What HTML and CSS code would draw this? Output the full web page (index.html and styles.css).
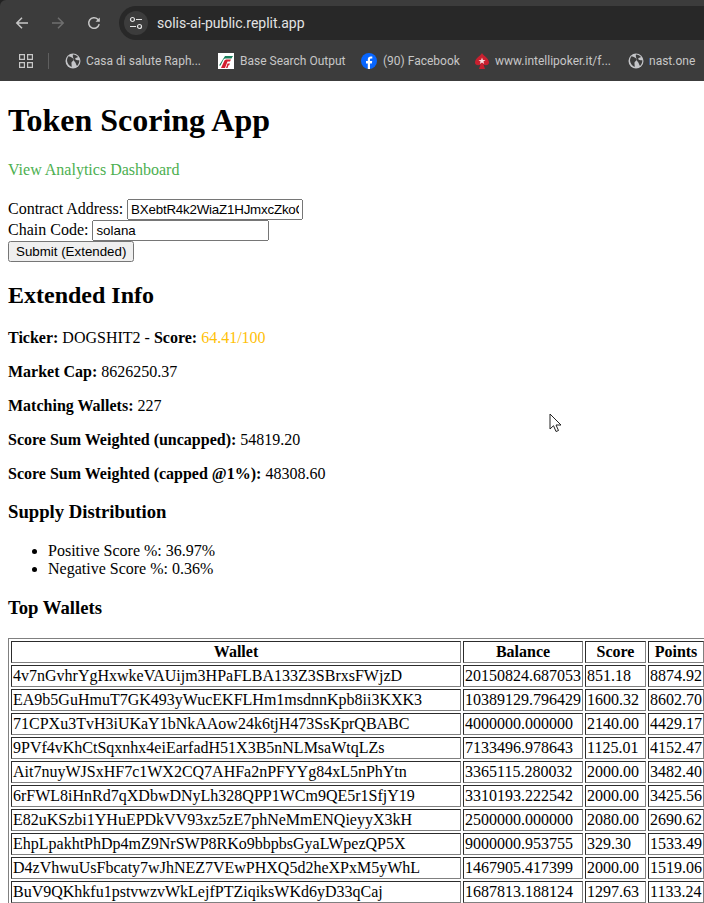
FILE: index.html
```html
<!DOCTYPE html>
<html lang="en">
<head>
<meta charset="utf-8">
<title>Token Scoring App</title>
<link rel="stylesheet" href="styles.css">
</head>
<body>
<div class="window">
  <header class="chrome">
    <div class="tabstrip"></div>
    <div class="toolbar">
      <svg class="nav" width="14" height="14" viewBox="0 0 14 14"><path d="M13 7H2M7 1.800L1.800 7 7 12.200" fill="none" stroke="#c7c7c7" stroke-width="1.500"/></svg>
      <svg class="nav nav-fwd" width="14" height="14" viewBox="0 0 14 14"><path d="M1 7h11M7 1.800L12.200 7 7 12.200" fill="none" stroke="#6f6f6f" stroke-width="1.500"/></svg>
      <svg class="nav nav-reload" width="14" height="14" viewBox="0 0 14 14"><path d="M12.200 8.200A5.300 5.300 0 1 1 10.800 3.300L12 4.600" fill="none" stroke="#c7c7c7" stroke-width="1.500"/><path d="M12.800 1.500v4.300H8.500z" fill="#c7c7c7"/></svg>
      <div class="omnibox">
        <span class="tune">
          <svg width="14" height="14" viewBox="0 0 14 14"><circle cx="3.500" cy="3.500" r="2" fill="none" stroke="#e3e3e3" stroke-width="1.200"/><path d="M7 3.500h6M1 10.500h6" stroke="#e3e3e3" stroke-width="1.200"/><circle cx="10.500" cy="10.500" r="2" fill="none" stroke="#e3e3e3" stroke-width="1.200"/></svg>
        </span>
        <span class="url">solis-ai-public.replit.app</span>
      </div>
    </div>
    <nav class="bookmarks">
      <svg class="apps" width="14" height="14" viewBox="0 0 14 14"><path d="M.6.600h4.800v4.800H.6zM8.600.600h4.800v4.800H8.600zM.6 8.600h4.800v4.800H.6zM8.600 8.600h4.800v4.800H8.600z" fill="none" stroke="#c7c7c7" stroke-width="1.200"/></svg>
      <span class="sep"></span>
      <a class="bm bm-casa"><svg width="16" height="16" viewBox="0 0 16 16"><circle cx="8" cy="8" r="7.500" fill="#c4c5c8"/><path d="M3.500 3.200C6 4 8 4.500 8.500 6.500 9 8 6.800 8.200 6.500 9.500 6.300 11 7 12.500 6.500 14 4 12.500 2 10 2 7.500 2 6 2.500 4.500 3.500 3.200zM8 1.500c2 .2 3.800 1 5 2.500-1 .8-2.500 .6-2.800 1.800C10 7 12.500 7.200 14.300 7.300 14.500 9.500 13.500 11.500 12 13 11 12 11 10 10 9 9 8 8.500 6.500 8.300 5 8 3.800 7.500 2.800 8 1.500z" fill="#3c3c3c"/></svg><span>Casa di salute Raph...</span></a>
      <a class="bm bm-fs"><svg width="16" height="16" viewBox="0 0 16 16"><rect width="16" height="16" fill="#fff"/><path d="M7 3h8l-1.500 2.500H8C6.500 5.500 5.500 6 5 7.500L2.500 12.500H1z" fill="#1b7f5c"/><path d="M3 15l3-6.500C6.500 7 7.500 6.500 9 6.500h4L12 8.500H9.500L7 15z" fill="#d3202f"/><path d="M8 15l1.500-4.500H12l-.8 1.800H10.500L9.500 15z" fill="#d3202f"/></svg><span>Base Search Output</span></a>
      <a class="bm bm-fb"><svg width="16" height="16" viewBox="0 0 16 16"><circle cx="8" cy="8" r="8" fill="#0866ff"/><path d="M6.800 16V10.400H5V8h1.800V6.600C6.800 4.500 8 3.400 9.800 3.400c.6 0 1.200.1 1.500.1v2H10.200C9.300 5.500 9 6 9 6.700V8h2.200l-.4 2.400H9V16z" fill="#fff"/></svg><span>(90) Facebook</span></a>
      <a class="bm bm-poker"><svg width="16" height="16" viewBox="0 0 16 16"><path d="M8 0C9 2.500 15 5 15 9.500 15 12 12 13 9.500 11.500L11 16H5l1.500-4.500C4 13 1 12 1 9.500 1 5 7 2.500 8 0z" fill="#c8202f"/><path d="M8 4.500l.9 2.500h2.600L9.400 8.500l.8 2.500L8 9.500 5.800 11l.8-2.500L4.500 7h2.600z" fill="#f6e3e3"/></svg><span>www.intellipoker.it/f...</span></a>
      <a class="bm bm-nast"><svg width="16" height="16" viewBox="0 0 16 16"><circle cx="8" cy="8" r="7.500" fill="#c4c5c8"/><path d="M3.500 3.200C6 4 8 4.500 8.500 6.500 9 8 6.800 8.200 6.500 9.500 6.300 11 7 12.500 6.500 14 4 12.500 2 10 2 7.500 2 6 2.500 4.500 3.500 3.200zM8 1.500c2 .2 3.800 1 5 2.500-1 .8-2.500 .6-2.800 1.800C10 7 12.500 7.200 14.300 7.300 14.500 9.500 13.500 11.500 12 13 11 12 11 10 10 9 9 8 8.500 6.500 8.300 5 8 3.800 7.500 2.800 8 1.500z" fill="#3c3c3c"/></svg><span>nast.one</span></a>
    </nav>
  </header>
  <main class="page">
    <h1>Token Scoring App</h1>
    <p class="dash-row"><a class="dash" href="#">View Analytics Dashboard</a></p>
    <form>
      <label>Contract Address: <input class="addr" type="text" value="BXebtR4k2WiaZ1HJmxcZkoGYYcPumpVgE"></label><br>
      <label>Chain Code: <input class="chain" type="text" value="solana"></label><br>
      <button type="button">Submit (Extended)</button>
    </form>
    <h2>Extended Info</h2>
    <p><strong>Ticker:</strong> DOGSHIT2 - <strong>Score:</strong> <span class="score">64.41/100</span></p>
    <p><strong>Market Cap:</strong> 8626250.37</p>
    <p><strong>Matching Wallets:</strong> 227</p>
    <p><strong>Score Sum Weighted (uncapped):</strong> 54819.20</p>
    <p><strong>Score Sum Weighted (capped @1%):</strong> 48308.60</p>
    <h3>Supply Distribution</h3>
    <ul>
      <li>Positive Score %: 36.97%</li>
      <li>Negative Score %: 0.36%</li>
    </ul>
    <h3>Top Wallets</h3>
    <table border="1">
      <thead><tr><th class="c-wallet">Wallet</th><th class="c-balance">Balance</th><th class="c-score">Score</th><th class="c-points">Points</th></tr></thead>
      <tbody>
        <tr><td>4v7nGvhrYgHxwkeVAUijm3HPaFLBA133Z3SBrxsFWjzD</td><td>20150824.687053</td><td>851.18</td><td>8874.92</td></tr>
        <tr><td>EA9b5GuHmuT7GK493yWucEKFLHm1msdnnKpb8ii3KXK3</td><td>10389129.796429</td><td>1600.32</td><td>8602.70</td></tr>
        <tr><td>71CPXu3TvH3iUKaY1bNkAAow24k6tjH473SsKprQBABC</td><td>4000000.000000</td><td>2140.00</td><td>4429.17</td></tr>
        <tr><td>9PVf4vKhCtSqxnhx4eiEarfadH51X3B5nNLMsaWtqLZs</td><td>7133496.978643</td><td>1125.01</td><td>4152.47</td></tr>
        <tr><td>Ait7nuyWJSxHF7c1WX2CQ7AHFa2nPFYYg84xL5nPhYtn</td><td>3365115.280032</td><td>2000.00</td><td>3482.40</td></tr>
        <tr><td>6rFWL8iHnRd7qXDbwDNyLh328QPP1WCm9QE5r1SfjY19</td><td>3310193.222542</td><td>2000.00</td><td>3425.56</td></tr>
        <tr><td>E82uKSzbi1YHuEPDkVV93xz5zE7phNeMmENQieyyX3kH</td><td>2500000.000000</td><td>2080.00</td><td>2690.62</td></tr>
        <tr><td>EhpLpakhtPhDp4mZ9NrSWP8RKo9bbpbsGyaLWpezQP5X</td><td>9000000.953755</td><td>329.30</td><td>1533.49</td></tr>
        <tr><td>D4zVhwuUsFbcaty7wJhNEZ7VEwPHXQ5d2heXPxM5yWhL</td><td>1467905.417399</td><td>2000.00</td><td>1519.06</td></tr>
        <tr><td>BuV9QKhkfu1pstvwzvWkLejfPTZiqiksWKd6yD33qCaj</td><td>1687813.188124</td><td>1297.63</td><td>1133.24</td></tr>
      </tbody>
    </table>
    <svg class="cursor" width="14" height="20" viewBox="0 0 14 20"><path d="M1 1v15l3.500-3.300L7 18.500l2.500-1-2.500-5.500h5z" fill="#fff" stroke="#222" stroke-width="1"/></svg>
  </main>
</div>
</body>
</html>
```
FILE: styles.css
```css
html, body {
  margin: 0;
  padding: 0;
  background: #fff;
  overflow: hidden;
}
.window {
  width: 704px;
  height: 903px;
  overflow: hidden;
  display: flex;
  flex-direction: column;
  background: #222;
}
.chrome {
  flex: none;
  height: 81px;
  background: #3c3c3c;
  border-top-left-radius: 6px;
  font-family: Roboto, "Noto Sans", sans-serif;
  color: #c7c7c7;
  display: flex;
  flex-direction: column;
}
.tabstrip {
  height: 6px;
  flex: none;
}
.toolbar {
  height: 34px;
  flex: none;
  display: flex;
  align-items: center;
  padding-left: 15px;
}
.toolbar svg, .bookmarks svg { flex: none; }
.nav-fwd { margin-left: 22px; }
.nav-reload { margin-left: 22px; }
.omnibox {
  margin-left: 18px;
  flex: 1;
  height: 34px;
  background: #282828;
  border-radius: 17px 0 0 17px;
  display: flex;
  align-items: center;
  padding-left: 5px;
}
.tune {
  width: 24px;
  height: 24px;
  border-radius: 50%;
  background: #3c3c3c;
  display: flex;
  align-items: center;
  justify-content: center;
}
.url {
  margin-left: 9px;
  font-size: 14px;
  color: #e3e3e3;
}
.bookmarks {
  flex: 1;
  display: flex;
  align-items: center;
  padding-left: 19px;
  font-size: 12px;
  color: #c7c7c7;
}
.sep {
  flex: none;
  width: 1px;
  height: 16px;
  background: #5f5f5f;
  margin: 0 16px 0 15px;
}
.bm {
  flex: none;
  display: flex;
  align-items: center;
  gap: 5px;
  white-space: nowrap;
}
.bm-casa { width: 153px; }
.bm-fs { width: 143px; gap: 6px; }
.bm-fb { width: 113px; gap: 6px; }
.bm-poker { width: 154px; }
.page {
  position: relative;
  flex: 1;
  padding: 0 8px;
  overflow: hidden;
  background: #fff;
  font-family: "Liberation Serif", "Times New Roman", serif;
  font-size: 16px;
  color: #000;
}
h1, h2, h3, p, ul, form { margin: 0; }
h1 { font-size: 32px; margin: 21.44px 0; }
h2 { font-size: 24px; margin: 19.92px 0; }
h3 { font-size: 18.72px; margin: 18.72px 0; }
p { margin: 16px 0; }
.dash-row { margin-bottom: 20px; }
ul { margin: 16px 0; padding-left: 40px; }
.dash { color: #4caf50; text-decoration: none; }
.score { color: #ffc107; }
input, button {
  font-family: "Liberation Sans", Arial, sans-serif;
  font-size: 13.333px;
}
input { width: 168px; }
.chain { width: 169px; }
.addr { letter-spacing: -0.2px; }
table {
  table-layout: fixed;
  width: 699px;
  white-space: nowrap;
}
.c-wallet { width: 446px; }
.c-balance { width: 116px; }
.c-score { width: 57px; }
.c-points { width: 52px; }
.cursor {
  position: absolute;
  left: 549px;
  top: 332px;
}
```
